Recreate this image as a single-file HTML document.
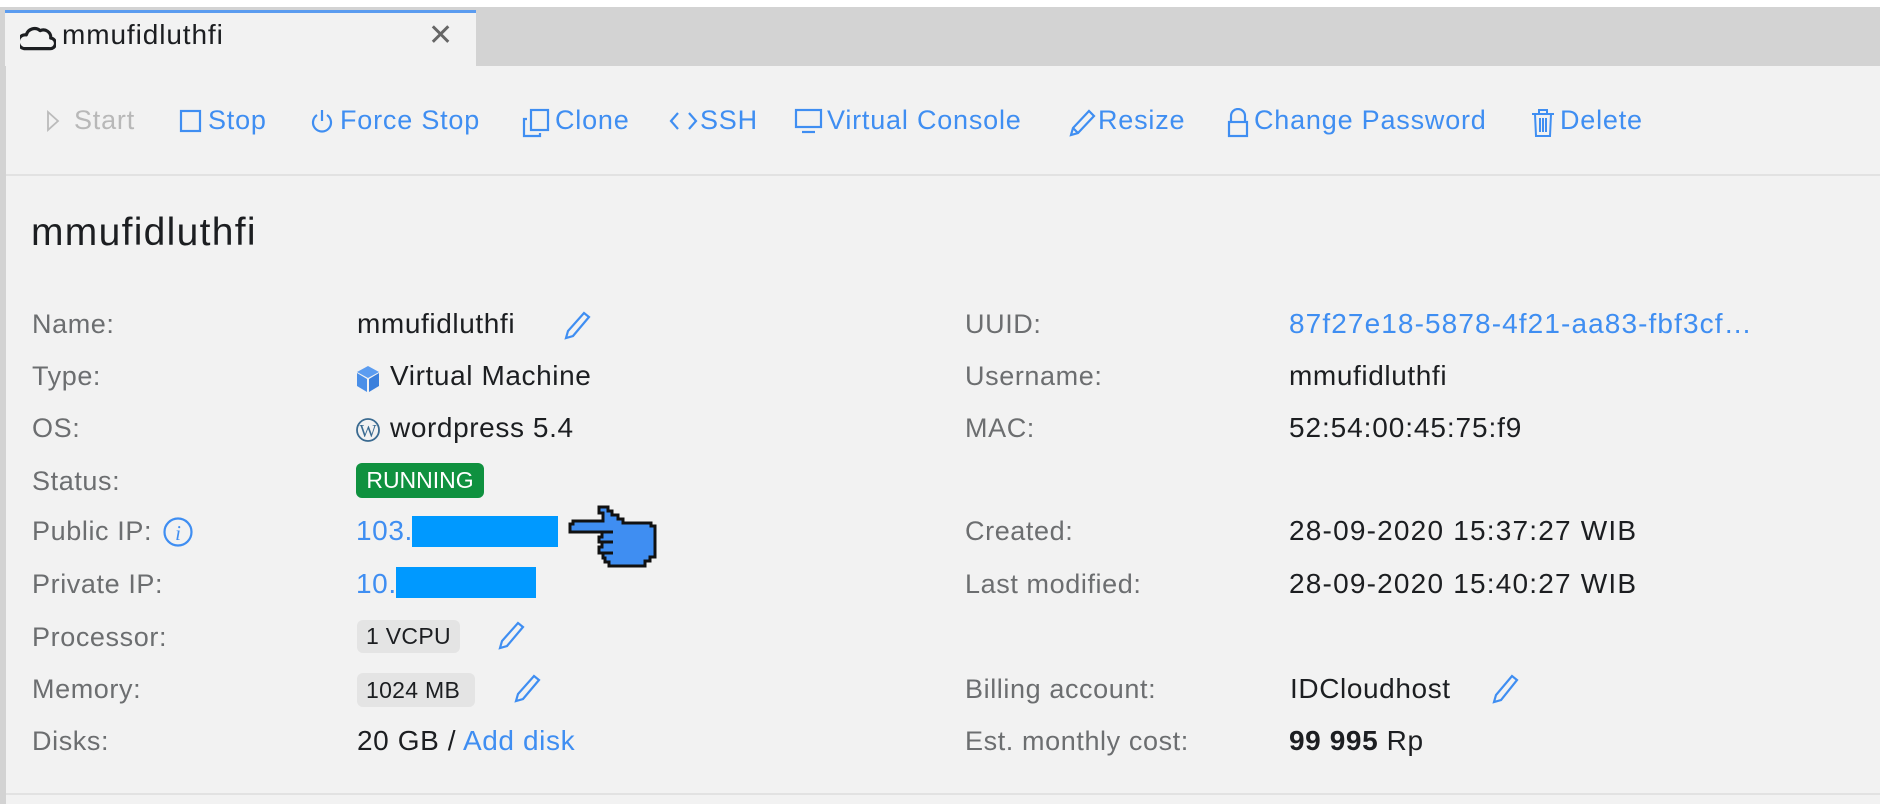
<!DOCTYPE html>
<html><head><meta charset="utf-8"><style>
*{margin:0;padding:0;box-sizing:border-box}
body{width:1880px;height:804px;background:#f2f2f2;font-family:"Liberation Sans",sans-serif;position:relative;overflow:hidden;color:#1c1e21}
.a{position:absolute;white-space:nowrap}
.tb{font-size:27px;color:#3f8ef2;letter-spacing:.8px;top:104px;line-height:32px}
.lb{font-size:27px;color:#6c6e70;letter-spacing:.6px;line-height:32px}
.v{font-size:28px;letter-spacing:.6px;line-height:32px}
.bl{color:#3f8ef2}
svg{position:absolute}
</style></head><body>
<div class="a" style="left:0;top:0;width:1880px;height:7px;background:#fff"></div>
<div class="a" style="left:0;top:7px;width:1880px;height:59px;background:#d3d3d3"></div>
<div class="a" style="left:0;top:7px;width:6px;height:797px;background:#d3d3d3"></div>
<div class="a" style="left:5px;top:10px;width:471px;height:56px;background:#f2f2f2;border-top:3px solid #5b9cf0"></div>
<svg style="left:20px;top:22px" width="36" height="30" viewBox="0 0 34 28"><path d="M4 25 H28 A5 5 0 0 0 29 15 A7 7 0 0 0 19 8 A8 8 0 0 0 6 12 A6.5 6.5 0 0 0 4 25Z" fill="none" stroke="#1c1e21" stroke-width="3" stroke-linejoin="round"/></svg>
<div class="a" style="left:62px;top:19px;font-size:28px;letter-spacing:.9px">mmufidluthfi</div>
<div class="a" style="left:428px;top:18px;font-size:30px;color:#666">✕</div>

<svg style="left:46px;top:110px" width="14" height="22"><path d="M2 2 L12 11 L2 20Z" fill="none" stroke="#bbb" stroke-width="1.8"/></svg>
<div class="a tb" style="left:74px;color:#b8b8b8">Start</div>
<svg style="left:179px;top:109px" width="24" height="24"><rect x="2" y="2" width="19" height="20" fill="none" stroke="#3f8ef2" stroke-width="2.2"/></svg>
<div class="a tb" style="left:208px">Stop</div>
<svg style="left:310px;top:107px" width="24" height="28"><path d="M7 8 A9 9 0 1 0 17 8" fill="none" stroke="#3f8ef2" stroke-width="2.2"/><path d="M12 3 V14" stroke="#3f8ef2" stroke-width="2.2"/></svg>
<div class="a tb" style="left:340px">Force Stop</div>
<svg style="left:522px;top:108px" width="30" height="30"><rect x="9" y="2" width="17" height="20" fill="none" stroke="#3f8ef2" stroke-width="2.2"/><path d="M5 11 H2 V28 H18 V25" fill="none" stroke="#3f8ef2" stroke-width="2.2"/></svg>
<div class="a tb" style="left:555px">Clone</div>
<svg style="left:669px;top:110px" width="30" height="22"><path d="M9 3 L2 11 L9 19 M20 3 L27 11 L20 19" fill="none" stroke="#3f8ef2" stroke-width="2.2"/></svg>
<div class="a tb" style="left:700px">SSH</div>
<svg style="left:794px;top:108px" width="30" height="26"><rect x="2" y="2" width="25" height="17" fill="none" stroke="#3f8ef2" stroke-width="2.2"/><path d="M8 24 H21" stroke="#3f8ef2" stroke-width="2.2"/></svg>
<div class="a tb" style="left:827px">Virtual Console</div>
<svg style="left:1067px;top:108px" width="30" height="30"><path d="M4 27 L6 20 L22 3 L27 8 L11 25Z M6 20 L11 25" fill="none" stroke="#3f8ef2" stroke-width="2.2"/></svg>
<div class="a tb" style="left:1098px">Resize</div>
<svg style="left:1226px;top:108px" width="24" height="30"><path d="M5 14 V8 A7 7 0 0 1 19 8 V14" fill="none" stroke="#3f8ef2" stroke-width="2.2"/><rect x="3" y="14" width="18" height="14" fill="none" stroke="#3f8ef2" stroke-width="2.2"/></svg>
<div class="a tb" style="left:1254px">Change Password</div>
<svg style="left:1530px;top:108px" width="26" height="30"><path d="M2 6 H24 M9 6 V2 H17 V6 M5 6 L6 28 H20 L21 6 M10 10 V24 M13 10 V24 M16 10 V24" fill="none" stroke="#3f8ef2" stroke-width="2"/></svg>
<div class="a tb" style="left:1560px">Delete</div>

<div class="a" style="left:6px;top:174px;width:1874px;height:2px;background:#e2e2e2"></div>
<div class="a" style="left:31px;top:211px;font-size:39px;letter-spacing:1.3px;line-height:44px">mmufidluthfi</div>

<div class="a lb" style="left:32px;top:308px">Name:</div>
<div class="a lb" style="left:32px;top:360px">Type:</div>
<div class="a lb" style="left:32px;top:412px">OS:</div>
<div class="a lb" style="left:32px;top:465px">Status:</div>
<div class="a lb" style="left:32px;top:515px">Public IP:</div>
<div class="a lb" style="left:32px;top:568px">Private IP:</div>
<div class="a lb" style="left:32px;top:621px">Processor:</div>
<div class="a lb" style="left:32px;top:673px">Memory:</div>
<div class="a lb" style="left:32px;top:725px">Disks:</div>
<svg style="left:162px;top:516px" width="32" height="32"><circle cx="16" cy="16" r="13.5" fill="none" stroke="#3f8ef2" stroke-width="2.2"/><text x="16" y="24" font-family="Liberation Serif" font-style="italic" font-size="21" fill="#3f8ef2" text-anchor="middle">i</text></svg>

<div class="a v" style="left:357px;top:308px">mmufidluthfi</div>
<svg style="left:562px;top:310px" width="30" height="30"><path d="M4 28 L6 21 L22 3 L27 7 L11 26Z" fill="none" stroke="#3f8ef2" stroke-width="2.2"/></svg>
<svg style="left:356px;top:364px" width="26" height="30"><path d="M12 2 L23 8 L12 14 L1 8Z" fill="#5b9cf0"/><path d="M1 9 L11 15 V28 L1 22Z" fill="#4a8fe8"/><path d="M13 15 L23 9 V22 L13 28Z" fill="#3a7fdc"/></svg>
<div class="a v" style="left:390px;top:360px">Virtual Machine</div>
<svg style="left:356px;top:416px" width="26" height="28"><circle cx="12" cy="14" r="11" fill="none" stroke="#3a6a90" stroke-width="1.8"/><text x="12" y="21" font-family="Liberation Serif" font-size="18" fill="#3a6a90" text-anchor="middle">W</text></svg>
<div class="a v" style="left:390px;top:412px">wordpress 5.4</div>
<div class="a" style="left:356px;top:463px;width:128px;height:35px;background:#0f913f;border-radius:6px;color:#fff;font-size:23px;line-height:35px;text-align:center">RUNNING</div>
<div class="a v bl" style="left:356px;top:515px">103.</div>
<div class="a" style="left:412px;top:516px;width:146px;height:31px;background:#0099ff"></div>
<div class="a v bl" style="left:356px;top:568px">10.</div>
<div class="a" style="left:396px;top:567px;width:140px;height:31px;background:#0099ff"></div>
<svg style="left:565px;top:502px" width="100" height="70"><path d="M34 5 H43 V9 H47 V13 H53 V17 H58 V21 H86 V24 H90 V55 H85 V59 H80 V64 H44 V60 H40 V56 H38 V51 H34 V45 H37 V40 H34 V35 H37 V30 H5 V22 H8 V19 H38 V11 H34Z" fill="#3f8ef2" stroke="#111" stroke-width="3" stroke-linejoin="miter"/><path d="M37 30 H48 M37 40 H48 M38 51 H48" stroke="#111" stroke-width="3"/></svg>
<div class="a" style="left:357px;top:620px;width:103px;height:33px;background:#e4e4e4;border-radius:6px;font-size:23px;line-height:33px;padding-left:9px;letter-spacing:.3px">1 VCPU</div>
<svg style="left:496px;top:620px" width="30" height="30"><path d="M4 28 L6 21 L22 3 L27 7 L11 26Z" fill="none" stroke="#3f8ef2" stroke-width="2.2"/></svg>
<div class="a" style="left:357px;top:673px;width:118px;height:34px;background:#e4e4e4;border-radius:6px;font-size:23px;line-height:34px;padding-left:9px;letter-spacing:.3px">1024 MB</div>
<svg style="left:512px;top:673px" width="30" height="30"><path d="M4 28 L6 21 L22 3 L27 7 L11 26Z" fill="none" stroke="#3f8ef2" stroke-width="2.2"/></svg>
<div class="a v" style="left:357px;top:725px">20 GB / <span class="bl">Add disk</span></div>

<div class="a lb" style="left:965px;top:308px">UUID:</div>
<div class="a lb" style="left:965px;top:360px">Username:</div>
<div class="a lb" style="left:965px;top:412px">MAC:</div>
<div class="a lb" style="left:965px;top:515px">Created:</div>
<div class="a lb" style="left:965px;top:568px">Last modified:</div>
<div class="a lb" style="left:965px;top:673px">Billing account:</div>
<div class="a lb" style="left:965px;top:725px">Est. monthly cost:</div>

<div class="a v bl" style="left:1289px;top:308px;letter-spacing:1.1px">87f27e18-5878-4f21-aa83-fbf3cf…</div>
<div class="a v" style="left:1289px;top:360px">mmufidluthfi</div>
<div class="a v" style="left:1289px;top:412px;letter-spacing:.9px">52:54:00:45:75:f9</div>
<div class="a v" style="left:1289px;top:515px;letter-spacing:1.2px">28-09-2020 15:37:27 WIB</div>
<div class="a v" style="left:1289px;top:568px;letter-spacing:1.2px">28-09-2020 15:40:27 WIB</div>
<div class="a v" style="left:1290px;top:673px">IDCloudhost</div>
<svg style="left:1490px;top:673px" width="30" height="32"><path d="M4 29 L6 22 L22 3 L27 7 L11 27Z" fill="none" stroke="#3f8ef2" stroke-width="2.2"/></svg>
<div class="a v" style="left:1289px;top:725px"><b>99 995</b> Rp</div>

<div class="a" style="left:6px;top:793px;width:1874px;height:2px;background:#e2e2e2"></div>
</body></html>
